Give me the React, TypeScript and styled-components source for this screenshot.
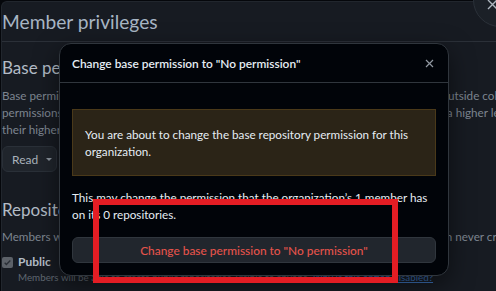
import React from "react";
import styled, { createGlobalStyle } from "styled-components";

const GlobalStyle = createGlobalStyle`
  html, body { margin: 0; padding: 0; background: #05070b; }
  body {
    width: 496px;
    height: 291px;
    overflow: hidden;
    font-family: Lato, "Noto Sans", sans-serif;
  }
  * { box-sizing: border-box; }
`;

const Page = styled.div`
  position: relative;
  width: 496px;
  height: 291px;
  overflow: hidden;
  padding-top: 1px;
`;

const Card = styled.section`
  margin-left: 1px;
  height: 100%;
  background: #171b22;
  border-top-left-radius: 6px;
  border-top: 1px solid #21262d;
  border-left: 1px solid #21262d;
`;

const CardHeader = styled.h2`
  margin: 0;
  height: 40px;
  border-bottom: 1px solid #2b3038;
  display: flex;
  align-items: center;
  font-size: 19.2px;
  font-weight: 400;
  color: #a7b5c4;
  white-space: nowrap;
`;

const Content = styled.div`
  padding-left: 0;
`;

const SectionTitle = styled.h3<{ $mt: number }>`
  margin: ${(p) => p.$mt}px 0 0;
  font-size: 17px;
  line-height: 22px;
  font-weight: 400;
  color: #b3bcc6;
  white-space: nowrap;
`;

const Para = styled.p<{ $mt: number }>`
  margin: ${(p) => p.$mt}px 0 0;
  font-size: 11.7px;
  line-height: 17px;
  color: #7d8590;
  white-space: nowrap;
`;

const Line = styled.span`
  display: block;
  white-space: nowrap;
`;

const DropButton = styled.button`
  margin-top: 8px;
  height: 26px;
  width: 55px;
  display: flex;
  align-items: center;
  gap: 8px;
  padding: 0 0 0 9px;
  background: #20252c;
  border: 1px solid #2a3038;
  border-radius: 6px;
  color: #a9b2bb;
  font-family: inherit;
  font-size: 12px;
`;

const Caret = styled.span`
  width: 0;
  height: 0;
  border-left: 3px solid transparent;
  border-right: 3px solid transparent;
  border-top: 3px solid #8b949e;
`;

const CheckRow = styled.label`
  margin-top: 9px;
  display: flex;
  align-items: center;
  gap: 5px;
  height: 16px;
  font-size: 12px;
  line-height: 16px;
  font-weight: 700;
  color: #b3bcc6;
`;

const CheckBox = styled.span`
  width: 11px;
  height: 11px;
  border-radius: 2px;
  background: #5c6168;
  display: flex;
  align-items: center;
  justify-content: center;
`;

const Note = styled.p`
  margin: 0 0 0 16px;
  font-size: 9.8px;
  line-height: 14px;
  color: #5f6771;
  white-space: nowrap;
`;

const NoteLink = styled.a`
  color: #3b6fb5;
  text-decoration: underline;
`;

const CornerClose = styled.div`
  position: absolute;
  left: 473px;
  top: -27px;
  width: 54px;
  height: 54px;
  border-radius: 50%;
  background: #1b2027;
  border: 1px solid #2b3139;
`;

const CornerX = styled.svg`
  position: absolute;
  left: 487px;
  top: -1px;
`;

const Dialog = styled.div`
  position: absolute;
  left: 59px;
  top: 43px;
  width: 390px;
  height: 233px;
  background: #010409;
  border: 1px solid #30363d;
  border-radius: 12px;
  display: flex;
  flex-direction: column;
  box-shadow: 0 8px 24px rgba(0, 0, 0, 0.5);
`;

const DialogHeader = styled.div`
  height: 39px;
  flex: none;
  border-bottom: 1px solid #30363d;
  display: flex;
  align-items: center;
  justify-content: space-between;
  padding: 0 14px 0 12px;
`;

const DialogTitle = styled.h1`
  margin: 0;
  font-size: 11.9px;
  font-weight: 600;
  color: #e6edf3;
  white-space: nowrap;
`;

const CloseIcon = styled.svg`
  display: block;
`;

const DialogBody = styled.div`
  padding: 26px 12px 0;
  display: flex;
  flex-direction: column;
`;

const Flash = styled.div`
  height: 67px;
  padding: 0 12px;
  display: flex;
  flex-direction: column;
  justify-content: center;
  background: #2b2417;
  border: 1px solid #4a3919;
  font-size: 11.7px;
  line-height: 17px;
  color: #e6edf3;
`;

const BodyText = styled.p`
  margin: 13px 0 0;
  font-size: 11.7px;
  line-height: 17px;
  color: #e6edf3;
`;

const DangerButton = styled.button`
  margin-top: 14px;
  height: 26px;
  width: 100%;
  background: #21262d;
  border: 1px solid #30363d;
  border-radius: 6px;
  color: #e5534b;
  font-family: inherit;
  font-size: 11.9px;
  font-weight: 500;
  cursor: pointer;
`;

const Annotation = styled.div`
  position: absolute;
  left: 93px;
  top: 199px;
  width: 305px;
  height: 84px;
  border: 6px solid #e41d24;
`;

export default function App() {
  return (
    <>
      <GlobalStyle />
      <Page>
        <Card>
          <CardHeader>Member privileges</CardHeader>
          <Content>
            <SectionTitle $mt={15}>Base permissions</SectionTitle>
            <Para $mt={8}>
              <Line>
                Base permissions to the organization’s repositories apply to all members and excludes outside
                collaborators. Since organization members can have
              </Line>
              <Line>
                permissions from multiple sources, members and collaborators who have been granted a higher level
                of access than the base permissions will retain
              </Line>
              <Line>their higher permission privileges.</Line>
            </Para>
            <DropButton>
              Read
              <Caret />
            </DropButton>
            <SectionTitle $mt={27}>Repository creation</SectionTitle>
            <Para $mt={7}>
              <Line>
                Members will be able to create only selected repository types. Outside collaborators can never
                create repositories.
              </Line>
            </Para>
            <CheckRow>
              <CheckBox>
                <svg width="9" height="9" viewBox="0 0 16 16">
                  <path d="M3 8.5l3 3 7-7" stroke="#2a2f36" strokeWidth="2.4" fill="none" />
                </svg>
              </CheckBox>
              Public
            </CheckRow>
            <Note>
              Members will be able to create public repositories, visible to anyone.{" "}
              <NoteLink>Why is this option disabled?</NoteLink>
            </Note>
          </Content>
        </Card>

        <CornerClose />
        <CornerX width="11" height="11" viewBox="0 0 11 11">
          <path d="M1 10L10 1M1 1l9 9" stroke="#aeb6bf" strokeWidth="1.4" />
        </CornerX>

        <Dialog role="dialog">
          <DialogHeader>
            <DialogTitle>Change base permission to "No permission"</DialogTitle>
            <CloseIcon width="9" height="9" viewBox="0 0 9 9">
              <path d="M1 1l7 7M8 1L1 8" stroke="#9198a1" strokeWidth="1.2" />
            </CloseIcon>
          </DialogHeader>
          <DialogBody>
            <Flash>
              <Line>You are about to change the base repository permission for this</Line>
              <Line>organization.</Line>
            </Flash>
            <BodyText>
              <Line>This may change the permission that the organization’s 1 member has</Line>
              <Line>on its 0 repositories.</Line>
            </BodyText>
            <DangerButton>Change base permission to "No permission"</DangerButton>
          </DialogBody>
        </Dialog>

        <Annotation />
      </Page>
    </>
  );
}
